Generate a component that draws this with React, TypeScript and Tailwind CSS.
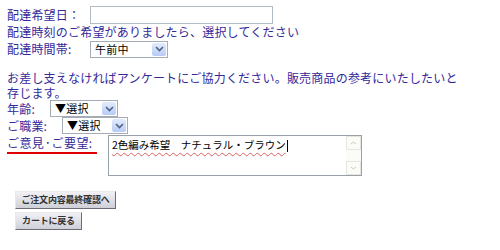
const font = { fontFamily: '"Noto Sans CJK JP", "Liberation Sans", sans-serif' }

const Chevron = () => (
  <svg width="9" height="6" viewBox="0 0 9 6">
    <path d="M1 1 L4.5 4.5 L8 1" fill="none" stroke="#4d6185" strokeWidth="1.6" />
  </svg>
)

interface SelectProps {
  value: string
  width: string
}

const FakeSelect = ({ value, width }: SelectProps) => (
  <div className={`flex h-[17px] ${width} items-stretch border border-[#a5acb5] bg-white`}>
    <span className="flex-1 pl-[4px] text-[11px] leading-[15px] text-black">{value}</span>
    <span className="m-[1px] flex w-[14px] items-center justify-center rounded-[2px] bg-gradient-to-b from-[#e3ebfd] to-[#b7cbf6]">
      <Chevron />
    </span>
  </div>
)

const Button = ({ label, width }: { label: string; width: string }) => (
  <div
    className={`flex h-[18px] ${width} items-center justify-center whitespace-nowrap border border-[#e8e8ee] border-b-[#6c6c78] border-r-[#6c6c78] bg-gradient-to-b from-[#f1f1f5] to-[#cfcfd8] text-[9px] font-bold tracking-[-0.2px] text-[#333]`}
  >
    {label}
  </div>
)

export default function App() {
  return (
    <div className="h-[250px] w-[500px] bg-white pl-[7px] pt-[6px] text-[12px] tracking-[0.2px] text-[#33299a]" style={font}>
      <div className="flex h-[18px] items-center">
        <span className="w-[83px]">配達希望日：</span>
        <div className="h-[18px] w-[183px] border border-[#b4bcc6] bg-white" />
      </div>
      <div className="h-[16px] leading-[16px]">配達時刻のご希望がありましたら、選択してください</div>
      <div className="flex h-[18px] items-center">
        <span className="w-[83px]">配達時間帯:</span>
        <FakeSelect value="午前中" width="w-[78px]" />
      </div>
      <p className="mt-[12px] leading-[15px]">
        お差し支えなければアンケートにご協力ください。販売商品の参考にいたしたいと
        <br />
        存じます。
      </p>
      <div className="flex h-[17px] items-center">
        <span className="w-[43px]">年齢:</span>
        <FakeSelect value="▼選択" width="w-[68px]" />
      </div>
      <div className="flex h-[17px] items-center">
        <span className="w-[55px]">ご職業:</span>
        <FakeSelect value="▼選択" width="w-[66px]" />
      </div>
      <div className="mt-[1px] flex items-start">
        <div className="w-[101px]">
          <div className="h-[14px] whitespace-nowrap leading-[14px] tracking-[0.4px]">
            ご意見<span className="align-[3px] text-[7px] font-bold">・</span>ご要望:
          </div>
          <div className="mt-[3px] h-[2px] w-[90px] bg-[#e00000]" />
        </div>
        <div className="flex h-[41px] w-[254px] border border-[#9aa0a8] bg-white">
          <div className="flex-1 pl-[3px] pt-[2px] text-[10.5px] leading-[14px] tracking-normal text-black">
            <span className="underline decoration-[#e06060] decoration-wavy decoration-[1px] underline-offset-[3px]">
              2色編み希望　ナチュラル・ブラウン
            </span>
            <span className="ml-[1px] inline-block h-[12px] w-px bg-black align-middle" />
          </div>
          <div className="flex w-[15px] flex-col justify-between bg-[#fbfbf7]">
            <div className="flex h-[14px] items-center justify-center border border-[#e6e6e0]">
              <svg width="7" height="4" viewBox="0 0 7 4"><path d="M1 3 L3.5 1 L6 3" fill="none" stroke="#c8ccc0" /></svg>
            </div>
            <div className="flex h-[14px] items-center justify-center border border-[#e6e6e0]">
              <svg width="7" height="4" viewBox="0 0 7 4"><path d="M1 1 L3.5 3 L6 1" fill="none" stroke="#c8ccc0" /></svg>
            </div>
          </div>
        </div>
      </div>
      <div className="mt-[15px] flex flex-col gap-[3px] pl-[8px]">
        <Button label="ご注文内容最終確認へ" width="w-[101px]" />
        <Button label="カートに戻る" width="w-[67px]" />
      </div>
    </div>
  )
}
